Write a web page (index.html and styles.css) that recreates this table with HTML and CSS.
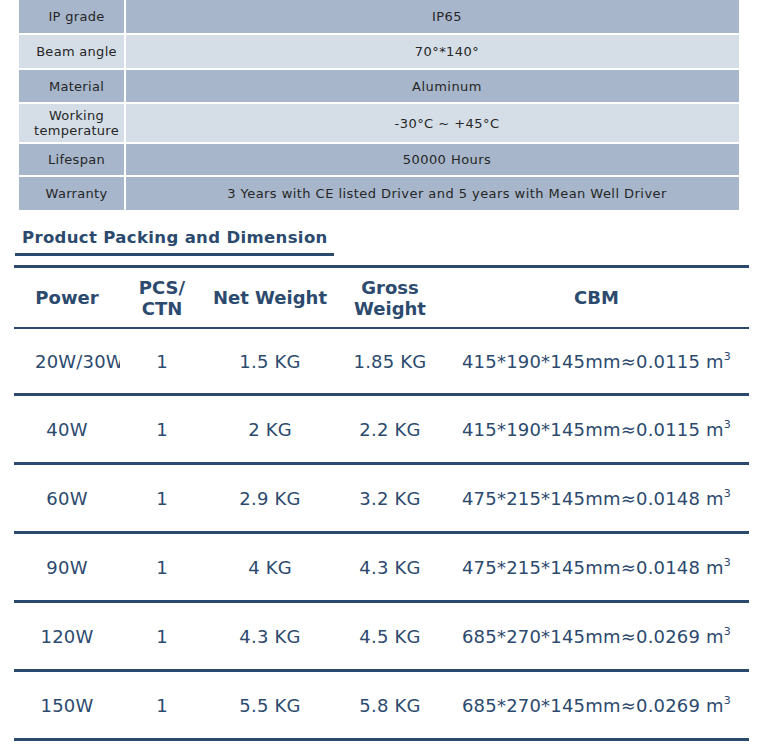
FILE: index.html
```html
<!DOCTYPE html>
<html>
<head>
<meta charset="utf-8">
<link rel="stylesheet" href="styles.css">
</head>
<body>
<table class="spec">
  <colgroup><col class="spec-k"><col></colgroup>
  <tr class="dark r1"><td>IP grade</td><td>IP65</td></tr>
  <tr class="light r2"><td>Beam angle</td><td>70°*140°</td></tr>
  <tr class="dark r3"><td>Material</td><td>Aluminum</td></tr>
  <tr class="light r4"><td>Working<br>temperature</td><td>-30°C ~ +45°C</td></tr>
  <tr class="dark r5"><td>Lifespan</td><td>50000 Hours</td></tr>
  <tr class="dark r6"><td>Warranty</td><td>3 Years with CE listed Driver and 5 years with Mean Well Driver</td></tr>
</table>

<div class="section-title"><h2>Product Packing and Dimension</h2></div>

<table class="pack">
  <colgroup>
    <col class="c1"><col class="c2"><col class="c3"><col class="c4"><col class="c5">
  </colgroup>
  <thead>
    <tr><th>Power</th><th>PCS/<br>CTN</th><th>Net Weight</th><th>Gross<br>Weight</th><th>CBM</th></tr>
  </thead>
  <tbody>
    <tr class="first"><td class="clip"><div>20W/30W</div></td><td>1</td><td>1.5 KG</td><td>1.85 KG</td><td>415*190*145mm≈0.0115 m<sup>3</sup></td></tr>
    <tr><td>40W</td><td>1</td><td>2 KG</td><td>2.2 KG</td><td>415*190*145mm≈0.0115 m<sup>3</sup></td></tr>
    <tr><td>60W</td><td>1</td><td>2.9 KG</td><td>3.2 KG</td><td>475*215*145mm≈0.0148 m<sup>3</sup></td></tr>
    <tr><td>90W</td><td>1</td><td>4 KG</td><td>4.3 KG</td><td>475*215*145mm≈0.0148 m<sup>3</sup></td></tr>
    <tr><td>120W</td><td>1</td><td>4.3 KG</td><td>4.5 KG</td><td>685*270*145mm≈0.0269 m<sup>3</sup></td></tr>
    <tr><td>150W</td><td>1</td><td>5.5 KG</td><td>5.8 KG</td><td>685*270*145mm≈0.0269 m<sup>3</sup></td></tr>
  </tbody>
</table>
</body>
</html>
```
FILE: styles.css
```css
html, body {
  margin: 0;
  padding: 0;
  background: #ffffff;
  font-family: "DejaVu Sans", Verdana, sans-serif;
}

.spec {
  margin-left: 19px;
  width: 720px;
  border-collapse: collapse;
  font-size: 13px;
  letter-spacing: 0.45px;
  color: #262626;
  text-align: center;
}
.spec-k { width: 106px; }
.spec td {
  border-left: 2px solid #ffffff;
  border-top: 2px solid #ffffff;
  padding: 0 0 0 29px;
  line-height: 15px;
}
.spec td:first-child {
  border-left: none;
  letter-spacing: 0.3px;
  padding: 0 0 0 10px;
}
.spec tr.r1 td { border-top: none; height: 33px; }
.spec tr.r2 td { height: 33px; }
.spec tr.r3 td { height: 32px; }
.spec tr.r4 td { height: 38px; }
.spec tr.r5 td { height: 31px; }
.spec tr.r6 td { height: 33px; }
.spec .dark td { background: #a7b6cb; }
.spec .light td { background: #d5dee6; }

.section-title {
  margin: 19px 0 0 15px;
  width: 319px;
  border-bottom: 3px solid #2c4a6e;
}
.section-title h2 {
  margin: 0;
  padding: 0 0 6px 7px;
  font-size: 16.5px;
  line-height: 18px;
  font-weight: bold;
  color: #2c4a6e;
  letter-spacing: 0.35px;
}

.pack {
  margin: 9px 0 0 14px;
  width: 735px;
  table-layout: fixed;
  border-collapse: collapse;
  color: #2c4a6e;
  text-align: center;
}
.c1 { width: 106px; }
.c2 { width: 84px; }
.c3 { width: 132px; }
.c4 { width: 108px; }
.c5 { width: 305px; }

.pack th {
  font-size: 18px;
  font-weight: bold;
  line-height: 21px;
  height: 59px;
  padding: 0;
  border-top: 3px solid #2c4a6e;
  border-bottom: 2px solid #2c4a6e;
}
.pack td {
  font-size: 18px;
  letter-spacing: 0.2px;
  height: 66px;
  padding: 0;
  border-bottom: 3px solid #2c4a6e;
  white-space: nowrap;
}
.pack tr.first td { height: 64px; }
.pack td.clip div {
  overflow: hidden;
  white-space: nowrap;
  text-align: left;
  padding-left: 21px;
}
.pack sup {
  font-size: 11px;
  vertical-align: 8px;
  line-height: 0;
}
```
